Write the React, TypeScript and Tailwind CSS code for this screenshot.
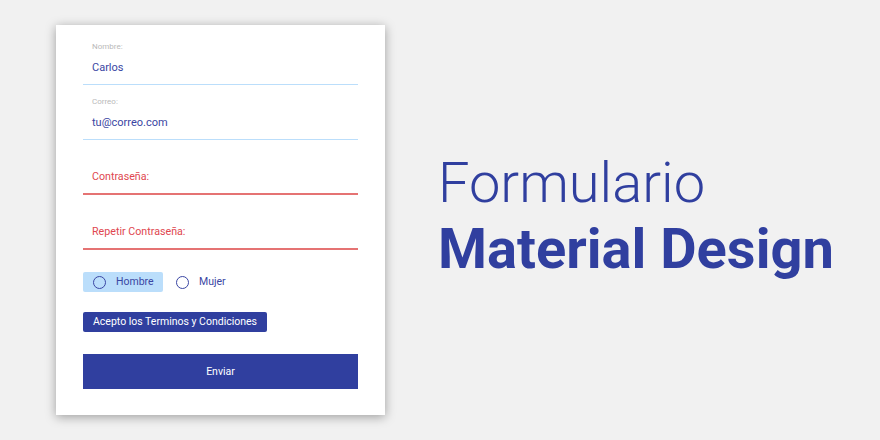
const font = { fontFamily: "Roboto, 'Noto Sans', sans-serif" };

function TextField({ label, value }: { label: string; value: string }) {
  return (
    <div className="flex flex-col pb-[9px] border-b border-[#bbdefb]">
      <span className="pl-[9px] text-[8px] leading-[10px] text-[#b9b9b9]">{label}</span>
      <span className="pl-[9px] mt-[9px] text-[11px] leading-[14px] text-[#3a46a3]">{value}</span>
    </div>
  );
}

function ErrorField({ label }: { label: string }) {
  return (
    <div className="flex flex-col mt-[30px] pb-[9px] border-b-2 border-[#e57373]">
      <span className="pl-[9px] text-[10.7px] leading-[14px] text-[#e0474f]">{label}</span>
    </div>
  );
}

function Radio({ label, active }: { label: string; active?: boolean }) {
  return (
    <div
      className={`flex items-center h-[20px] rounded-[2px] ${
        active ? "bg-[#bbdefb] w-[80px] pl-[10px]" : "ml-[13px]"
      }`}
    >
      <span className="w-[13px] h-[13px] rounded-full border-[1.5px] border-[#3a46a3]" />
      <span className="ml-[10px] text-[10.5px] leading-[14px] text-[#3a46a3]">{label}</span>
    </div>
  );
}

export default function App() {
  return (
    <div className="w-[880px] h-[440px] bg-[#f1f1f1] flex items-start overflow-hidden" style={font}>
      {/* Card */}
      <div className="ml-[56px] mt-[25px] w-[329px] h-[390px] bg-white shadow-[0_2px_10px_rgba(0,0,0,0.35)] flex flex-col px-[27px] pt-[17px]">
        <TextField label="Nombre:" value="Carlos" />
        <div className="mt-[12px]">
          <TextField label="Correo:" value="tu@correo.com" />
        </div>
        <ErrorField label="Contraseña:" />
        <ErrorField label="Repetir Contraseña:" />

        <div className="flex items-center mt-[22px]">
          <Radio label="Hombre" active />
          <Radio label="Mujer" />
        </div>

        <button className="mt-[20px] self-start h-[20px] px-[10px] bg-[#303f9f] rounded-[2px] text-white text-[10.5px] leading-[14px]">
          Acepto los Terminos y Condiciones
        </button>

        <button className="mt-[22px] h-[35px] w-full bg-[#303f9f] text-white text-[10.5px]">Enviar</button>
      </div>

      {/* Title */}
      <div className="ml-[53px] mt-[150px] flex flex-col text-[#303f9f]">
        <span className="text-[56px] leading-[66px] font-light">Formulario</span>
        <span className="text-[56px] leading-[66px] font-bold">Material Design</span>
      </div>
    </div>
  );
}
